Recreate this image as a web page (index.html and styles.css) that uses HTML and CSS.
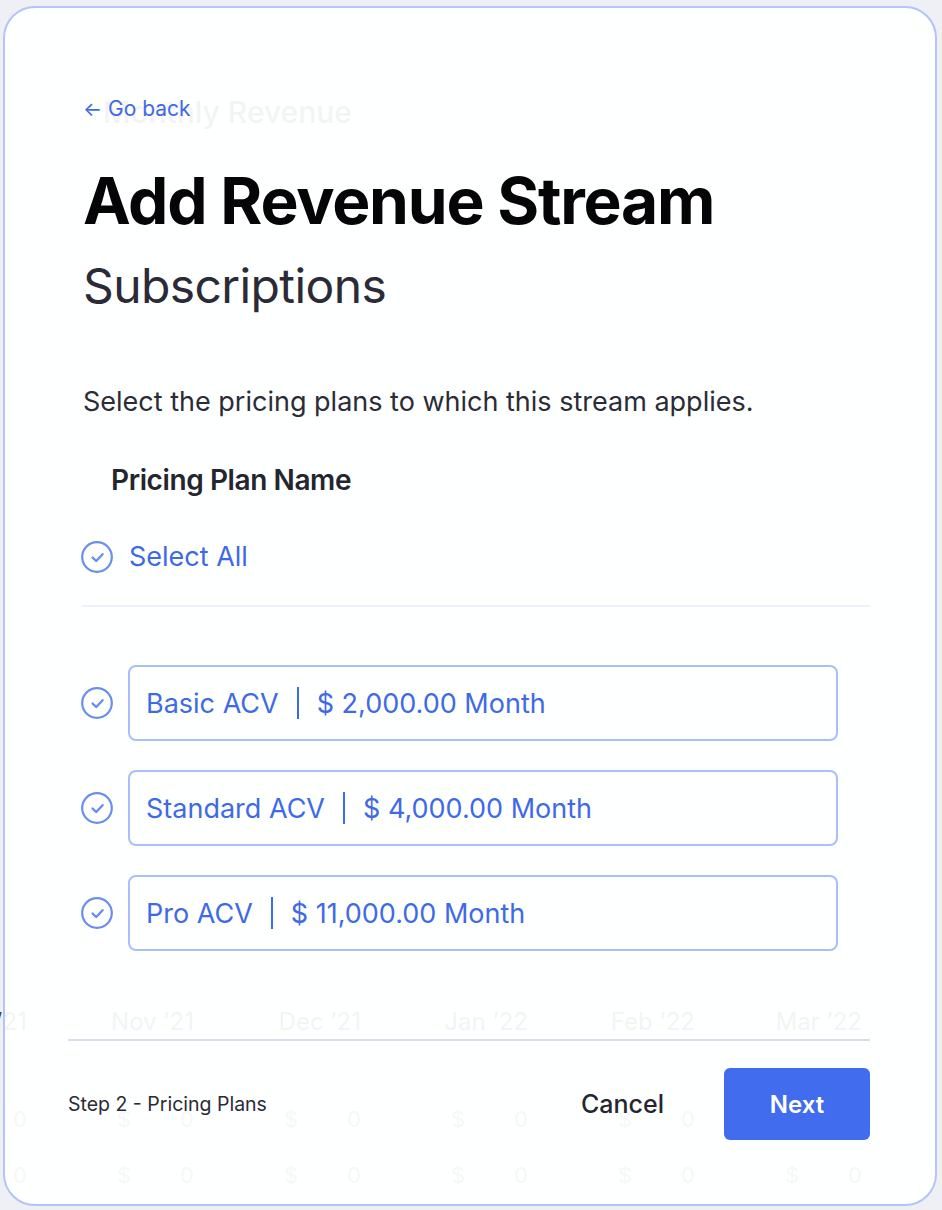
FILE: index.html
```html
<!DOCTYPE html>
<html lang="en">
<head>
<meta charset="utf-8">
<title>Add Revenue Stream</title>
<link rel="stylesheet" href="styles.css">
</head>
<body>
<div class="page">
  <div class="g-head">Monthly Revenue</div>
  <div class="g-chart"></div>
  <div class="g-months">
    <span>Oct ’21</span><span>Nov ’21</span><span>Dec ’21</span><span>Jan ’22</span><span>Feb ’22</span><span>Mar ’22</span>
  </div>
  <div class="g-row">
    <span class="g-cell"><i>$</i><b>0</b></span><span class="g-cell"><i>$</i><b>0</b></span><span class="g-cell"><i>$</i><b>0</b></span><span class="g-cell"><i>$</i><b>0</b></span><span class="g-cell"><i>$</i><b>0</b></span><span class="g-cell"><i>$</i><b>0</b></span>
  </div>
  <div class="g-row g-row2">
    <span class="g-cell"><i>$</i><b>0</b></span><span class="g-cell"><i>$</i><b>0</b></span><span class="g-cell"><i>$</i><b>0</b></span><span class="g-cell"><i>$</i><b>0</b></span><span class="g-cell"><i>$</i><b>0</b></span><span class="g-cell"><i>$</i><b>0</b></span>
  </div>
</div>

<div class="modal">
  <div class="modal-body">
    <a class="back" href="#"><span class="arrow">←</span> Go back</a>
    <h1 class="title">Add Revenue Stream</h1>
    <h2 class="subtitle">Subscriptions</h2>
    <p class="desc">Select the pricing plans to which this stream applies.</p>
    <div class="colhead">Pricing Plan Name</div>
    <div class="select-all">
      <svg class="check" viewBox="0 0 32 32" width="32" height="32"><circle cx="16" cy="16" r="14.8" fill="none" stroke="#6a8ef0" stroke-width="2.2"/><path d="M11.6 16.6 L15.2 20 L21.6 13.2" fill="none" stroke="#6a8ef0" stroke-width="2.4" stroke-linecap="round" stroke-linejoin="round"/></svg>
      <span>Select All</span>
    </div>
    <div class="divider"></div>
    <div class="plans">
      <div class="plan">
        <svg class="check" viewBox="0 0 32 32" width="32" height="32"><circle cx="16" cy="16" r="14.8" fill="none" stroke="#6a8ef0" stroke-width="2.2"/><path d="M11.6 16.6 L15.2 20 L21.6 13.2" fill="none" stroke="#6a8ef0" stroke-width="2.4" stroke-linecap="round" stroke-linejoin="round"/></svg>
        <div class="plan-box"><span>Basic ACV</span><span class="sep"></span><span>$ 2,000.00 Month</span></div>
      </div>
      <div class="plan">
        <svg class="check" viewBox="0 0 32 32" width="32" height="32"><circle cx="16" cy="16" r="14.8" fill="none" stroke="#6a8ef0" stroke-width="2.2"/><path d="M11.6 16.6 L15.2 20 L21.6 13.2" fill="none" stroke="#6a8ef0" stroke-width="2.4" stroke-linecap="round" stroke-linejoin="round"/></svg>
        <div class="plan-box"><span>Standard ACV</span><span class="sep"></span><span>$ 4,000.00 Month</span></div>
      </div>
      <div class="plan">
        <svg class="check" viewBox="0 0 32 32" width="32" height="32"><circle cx="16" cy="16" r="14.8" fill="none" stroke="#6a8ef0" stroke-width="2.2"/><path d="M11.6 16.6 L15.2 20 L21.6 13.2" fill="none" stroke="#6a8ef0" stroke-width="2.4" stroke-linecap="round" stroke-linejoin="round"/></svg>
        <div class="plan-box"><span>Pro ACV</span><span class="sep"></span><span>$ 11,000.00 Month</span></div>
      </div>
    </div>
  </div>
  <div class="footer">
    <span class="step">Step 2 - Pricing Plans</span>
    <div class="actions">
      <button class="btn-cancel" type="button">Cancel</button>
      <button class="btn-next" type="button">Next</button>
    </div>
  </div>
</div>
</body>
</html>
```

FILE: styles.css
```css
* { box-sizing: border-box; }
html, body { margin: 0; padding: 0; }
body {
  width: 942px;
  height: 1210px;
  overflow: hidden;
  background: #eff0f5;
  font-family: Inter, "Noto Sans", sans-serif;
  position: relative;
}

/* ghosted dashboard behind the dialog */
.page { width: 942px; height: 1210px; overflow: hidden; }
.g-head {
  padding: 95px 0 0 103px;
  font-size: 30px;
  line-height: 34px;
  font-weight: 500;
  color: #3a3c4a;
}
.g-chart { height: 878px; }
.g-months {
  display: grid;
  grid-template-columns: repeat(6, 167px);
  margin-left: -140px;
  font-size: 24px;
  line-height: 30px;
  color: #3a3c4a;
  text-align: right;
}
.g-row {
  display: grid;
  grid-template-columns: repeat(6, 167px);
  margin-left: -140px;
  margin-top: 68px;
  font-size: 22px;
  line-height: 28px;
  color: #6e7182;
}
.g-row2 { margin-top: 28px; }
.g-cell { display: flex; justify-content: space-between; padding-left: 90px; }
.g-cell i, .g-cell b { font-style: normal; font-weight: 400; }

/* dialog */
.modal {
  position: absolute;
  left: 3px;
  top: 6px;
  width: 934px;
  height: 1200px;
  border: 2px solid #b3c4f6;
  border-radius: 32px;
  background: rgba(255, 255, 255, 0.94);
  display: flex;
  flex-direction: column;
  padding: 0 65px 0 63px;
}
.modal-body {
  display: flex;
  flex-direction: column;
  padding-left: 15px;
}
.back {
  margin-top: 89px;
  font-size: 21px;
  line-height: 24px;
  color: #3e6ae6;
  text-decoration: none;
  align-self: flex-start;
}
.arrow { font-size: 20px; }
.title {
  margin: 40px 0 0;
  font-size: 64px;
  line-height: 80px;
  font-weight: 700;
  letter-spacing: -1.2px;
  color: #050507;
}
.subtitle {
  margin: 15px 0 0;
  font-size: 48px;
  line-height: 60px;
  font-weight: 400;
  letter-spacing: -0.6px;
  color: #2a2b36;
}
.desc {
  margin: 70px 0 0;
  font-size: 27px;
  line-height: 32px;
  color: #2b2c37;
}
.colhead {
  margin-top: 46px;
  padding-left: 28px;
  font-size: 28px;
  line-height: 32px;
  font-weight: 600;
  letter-spacing: -0.4px;
  color: #24252f;
}
.select-all {
  margin-top: 45px;
  display: flex;
  align-items: center;
  gap: 16px;
  margin-left: -2px;
  font-size: 27px;
  line-height: 32px;
  color: #3e6ae6;
}
.check { display: block; flex: none; }
.divider {
  margin-top: 32px;
  height: 2px;
  background: #eef1fc;
  margin-left: -1px;
}
.plans {
  margin-top: 58px;
  display: flex;
  flex-direction: column;
  gap: 29px;
  margin-left: -2px;
}
.plan {
  display: flex;
  align-items: center;
  gap: 15px;
}
.plan-box {
  width: 710px;
  height: 76px;
  border: 2px solid #abbef8;
  border-radius: 8px;
  display: flex;
  align-items: center;
  padding-left: 16px;
  font-size: 27px;
  color: #3e6ae6;
}
.sep {
  width: 2px;
  height: 32px;
  background: #3e6ae6;
  margin: 0 18px;
}
.footer {
  margin-top: auto;
  border-top: 2px solid #d9dcea;
  padding: 27px 0 64px;
  display: flex;
  align-items: center;
  justify-content: space-between;
}
.step {
  font-size: 19.5px;
  line-height: 24px;
  color: #2a2b36;
}
.actions { display: flex; align-items: center; gap: 60px; }
.btn-cancel {
  border: 0;
  background: none;
  padding: 0;
  font-family: inherit;
  font-size: 25px;
  font-weight: 500;
  color: #25262f;
}
.btn-next {
  width: 146px;
  height: 72px;
  border: 0;
  border-radius: 6px;
  background: #416ced;
  color: #fff;
  font-family: inherit;
  font-size: 24px;
  font-weight: 600;
}
```
